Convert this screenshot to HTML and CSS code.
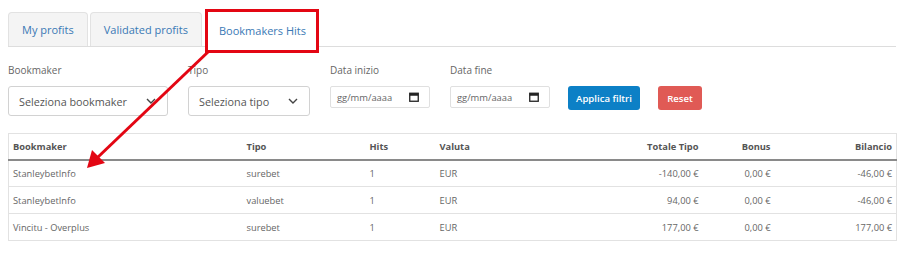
FILE: index.html
```html
<!DOCTYPE html>
<html lang="it">
<head>
<meta charset="utf-8">
<link rel="stylesheet" href="styles.css">
</head>
<body>
<div class="page">
  <ul class="tabs">
    <li class="tab">My profits</li>
    <li class="tab">Validated profits</li>
    <li class="tab active">Bookmakers Hits</li>
  </ul>

  <div class="filters">
    <div class="field f-book">
      <label>Bookmaker</label>
      <div class="select">Seleziona bookmaker<svg class="chev" viewBox="0 0 10 6" width="10" height="6"><path d="M1 1l4 4 4-4" fill="none" stroke="#444" stroke-width="1.4"/></svg></div>
    </div>
    <div class="field f-tipo">
      <label>Tipo</label>
      <div class="select">Seleziona tipo<svg class="chev" viewBox="0 0 10 6" width="10" height="6"><path d="M1 1l4 4 4-4" fill="none" stroke="#444" stroke-width="1.4"/></svg></div>
    </div>
    <div class="field f-date">
      <label>Data inizio</label>
      <div class="date">gg/mm/aaaa<svg class="cal" viewBox="0 0 10 10" width="10" height="10"><rect x="0.75" y="1.25" width="8.5" height="8" fill="none" stroke="#222" stroke-width="1.3"/><rect x="0.75" y="1.25" width="8.5" height="2.5" fill="#222"/></svg></div>
    </div>
    <div class="field f-date">
      <label>Data fine</label>
      <div class="date">gg/mm/aaaa<svg class="cal" viewBox="0 0 10 10" width="10" height="10"><rect x="0.75" y="1.25" width="8.5" height="8" fill="none" stroke="#222" stroke-width="1.3"/><rect x="0.75" y="1.25" width="8.5" height="2.5" fill="#222"/></svg></div>
    </div>
    <button class="btn btn-primary">Applica filtri</button>
    <button class="btn btn-danger">Reset</button>
  </div>

  <table class="hits">
    <colgroup>
      <col class="c1"><col class="c2"><col class="c3"><col class="c4"><col class="c5"><col class="c6"><col class="c7">
    </colgroup>
    <thead>
      <tr><th>Bookmaker</th><th>Tipo</th><th>Hits</th><th>Valuta</th><th class="r">Totale Tipo</th><th class="r">Bonus</th><th class="r">Bilancio</th></tr>
    </thead>
    <tbody>
      <tr><td>StanleybetInfo</td><td>surebet</td><td>1</td><td>EUR</td><td class="r">-140,00 €</td><td class="r">0,00 €</td><td class="r">-46,00 €</td></tr>
      <tr><td>StanleybetInfo</td><td>valuebet</td><td>1</td><td>EUR</td><td class="r">94,00 €</td><td class="r">0,00 €</td><td class="r">-46,00 €</td></tr>
      <tr><td>Vincitu - Overplus</td><td>surebet</td><td>1</td><td>EUR</td><td class="r">177,00 €</td><td class="r">0,00 €</td><td class="r">177,00 €</td></tr>
    </tbody>
  </table>

  <div class="highlight"></div>
  <svg class="arrow" width="908" height="256" viewBox="0 0 908 256">
    <line x1="208" y1="52" x2="97" y2="158" stroke="#e30613" stroke-width="3"/>
    <polygon points="87,168 92,150 105,163" fill="#e30613"/>
  </svg>
</div>
</body>
</html>
```

FILE: styles.css
```css
* { box-sizing: border-box; }
html, body { margin: 0; padding: 0; background: #fff; }
body {
  font-family: "Open Sans", "Liberation Sans", sans-serif;
  color: #555;
}
.page {
  position: relative;
  width: 908px;
  height: 256px;
  padding: 12px 12px 0 8px;
}
.tabs {
  list-style: none;
  margin: 0;
  padding: 0;
  display: flex;
  gap: 2px;
  border-bottom: 1px solid #ddd;
  height: 35px;
}
.tab {
  height: 34px;
  padding: 0 13px;
  display: flex;
  align-items: center;
  font-size: 11px;
  color: #3a79b5;
  background: #f4f4f4;
  border: 1px solid #e2e2e2;
  border-bottom: none;
  border-radius: 4px 4px 0 0;
}
.tab.active {
  background: #fff;
  margin-left: 2px;
  padding: 0 12px;
  border-color: #fff;
  height: 35px;
}

.filters {
  display: flex;
  align-items: flex-start;
  margin-top: 17px;
}
.field { display: flex; flex-direction: column; }
.field label {
  font-size: 10px;
  color: #666;
  height: 13px;
  line-height: 13px;
  margin-bottom: 9px;
}
.f-book { width: 160px; margin-right: 20px; }
.f-tipo { width: 122px; margin-right: 20px; }
.f-date { width: 100px; margin-right: 20px; }
.select {
  height: 30px;
  border: 1px solid #d2d2d2;
  border-radius: 3px;
  display: flex;
  align-items: center;
  justify-content: space-between;
  padding: 0 11px 0 10px;
  font-size: 10.8px;
  color: #555;
}
.chev { flex: none; }
.date {
  height: 22px;
  border: 1px solid #e0e0e0;
  border-radius: 2px;
  display: flex;
  align-items: center;
  justify-content: space-between;
  padding: 0 10px 0 6px;
  font-size: 9.4px;
  color: #666;
}
.cal { flex: none; }
.btn {
  margin-top: 22px;
  height: 24px;
  border: none;
  border-radius: 3px;
  color: #fff;
  font-family: "Open Sans", "Liberation Sans", sans-serif;
  font-size: 9.6px;
  font-weight: 600;
  padding: 0;
  white-space: nowrap;
  text-align: center;
}
.btn-primary { background: #0c80c6; margin-left: -2px; width: 72px; }
.btn-danger { background: #e05a55; margin-left: 18px; width: 44px; }

.hits {
  margin-top: 17px;
  width: 888px;
  border-collapse: collapse;
  table-layout: fixed;
  border: 1px solid #e2e2e2;
  font-size: 9.3px;
}
.c1 { width: 234px; }
.c2 { width: 123px; }
.c3 { width: 70px; }
.c4 { width: 125px; }
.c5 { width: 142px; }
.c6 { width: 72px; }
.c7 { width: 122px; }
.hits th {
  text-align: left;
  font-weight: 700;
  color: #555;
  height: 26px;
  padding: 0 4px;
  border-bottom: 2px solid #8a8a8a;
}
.hits td {
  height: 27px;
  padding: 0 4px;
  color: #666;
  border-top: 1px solid #e2e2e2;
}
.hits .r { text-align: right; }

.highlight {
  position: absolute;
  left: 205px;
  top: 9px;
  width: 114px;
  height: 44px;
  border: 3px solid #e30613;
}
.arrow {
  position: absolute;
  left: 0;
  top: 0;
  pointer-events: none;
}
```
